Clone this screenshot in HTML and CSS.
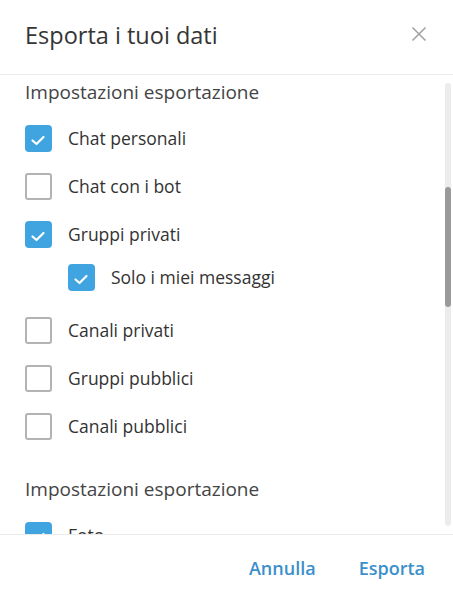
FILE: index.html
```html
<!doctype html>
<html>
<head>
    <title>Esporta i tuoi dati</title>
    <meta charset="utf-8" />
    <meta name="viewport" content="width=device-width, initial-scale=1" />
    <link rel="stylesheet" href="styles.css">
</head>
<body>
<div class="dialog">
    <div class="header">
        <h1 class="title">Esporta i tuoi dati</h1>
        <svg class="close" width="16" height="16" viewBox="0 0 16 16">
            <path d="M1.5 1.5 L14.5 14.5 M14.5 1.5 L1.5 14.5" stroke="#a3a3a3" stroke-width="1.6" fill="none" />
        </svg>
    </div>

    <div class="body">
        <div class="content">
            <h2 class="section">Impostazioni esportazione</h2>
            <div class="row"><span class="box on"><svg viewBox="0 0 27 27"><path d="M7.5 15.5 L11.5 19 L18.5 12" /></svg></span>Chat personali</div>
            <div class="row"><span class="box"></span>Chat con i bot</div>
            <div class="row"><span class="box on"><svg viewBox="0 0 27 27"><path d="M7.5 15.5 L11.5 19 L18.5 12" /></svg></span>Gruppi privati</div>
            <div class="nested">
                <div class="row"><span class="box on"><svg viewBox="0 0 27 27"><path d="M7.5 15.5 L11.5 19 L18.5 12" /></svg></span>Solo i miei messaggi</div>
            </div>
            <div class="row"><span class="box"></span>Canali privati</div>
            <div class="row"><span class="box"></span>Gruppi pubblici</div>
            <div class="row"><span class="box"></span>Canali pubblici</div>

            <h2 class="section second">Impostazioni esportazione</h2>
            <div class="row"><span class="box on"><svg viewBox="0 0 27 27"><path d="M7.5 15.5 L11.5 19 L18.5 12" /></svg></span>Foto</div>
        </div>
        <div class="track"><div class="thumb"></div></div>
    </div>

    <div class="footer">
        <button class="btn">Annulla</button>
        <button class="btn">Esporta</button>
    </div>
</div>
</body>
</html>
```

FILE: styles.css
```css
html, body {
    margin: 0;
    padding: 0;
    background: #fff;
}
body {
    font-family: "Open Sans", "Noto Sans", sans-serif;
    color: #333;
}
.dialog {
    width: 453px;
    height: 600px;
    display: flex;
    flex-direction: column;
}

.header {
    height: 75px;
    padding: 0 26px 4px 25px;
    box-sizing: border-box;
    display: flex;
    align-items: center;
    justify-content: space-between;
    border-bottom: 1px solid #ebebeb;
    flex-shrink: 0;
}
.title {
    margin: 0;
    font-size: 23.5px;
    font-weight: 500;
    color: #353535;
}
.close {
    display: block;
    margin-top: -2px;
}

.body {
    position: relative;
    height: 459px;
    overflow: hidden;
    flex-shrink: 0;
}
.content {
    padding: 5px 0 0 25px;
}
.section {
    margin: 0 0 9px 0;
    height: 25px;
    line-height: 25px;
    font-size: 19px;
    font-weight: 500;
    color: #444;
}
.section.second {
    margin-top: 27px;
}
.row {
    height: 48px;
    display: flex;
    align-items: center;
    font-size: 17.5px;
    color: #333;
}
.nested {
    margin: -5px 0 5px 43px;
}
.box {
    width: 23px;
    height: 23px;
    border: 2px solid #b3b3b3;
    border-radius: 3px;
    margin-right: 16px;
    flex-shrink: 0;
}
.box.on {
    width: 27px;
    height: 27px;
    border: none;
    border-radius: 4px;
    background: #40a4e0;
}
.box svg {
    display: block;
    width: 27px;
    height: 27px;
}
.box svg path {
    fill: none;
    stroke: #fff;
    stroke-width: 2.2;
    stroke-linecap: round;
    stroke-linejoin: round;
}

.track {
    position: absolute;
    right: 2px;
    top: 8px;
    width: 6px;
    height: 443px;
    border-radius: 3px;
    background: #ececec;
}
.thumb {
    margin-top: 104px;
    height: 120px;
    border-radius: 3px;
    background: #9a9a9a;
}

.footer {
    flex: 1;
    border-top: 1px solid #ebebeb;
    display: flex;
    align-items: center;
    justify-content: flex-end;
    padding: 0 22px 0 0;
    gap: 31px;
}
.btn {
    border: none;
    background: none;
    padding: 6px 6px;
    font-family: "Open Sans", "Noto Sans", sans-serif;
    font-size: 18px;
    font-weight: 600;
    color: #3b8fcb;
    margin-top: 0;
}
```
